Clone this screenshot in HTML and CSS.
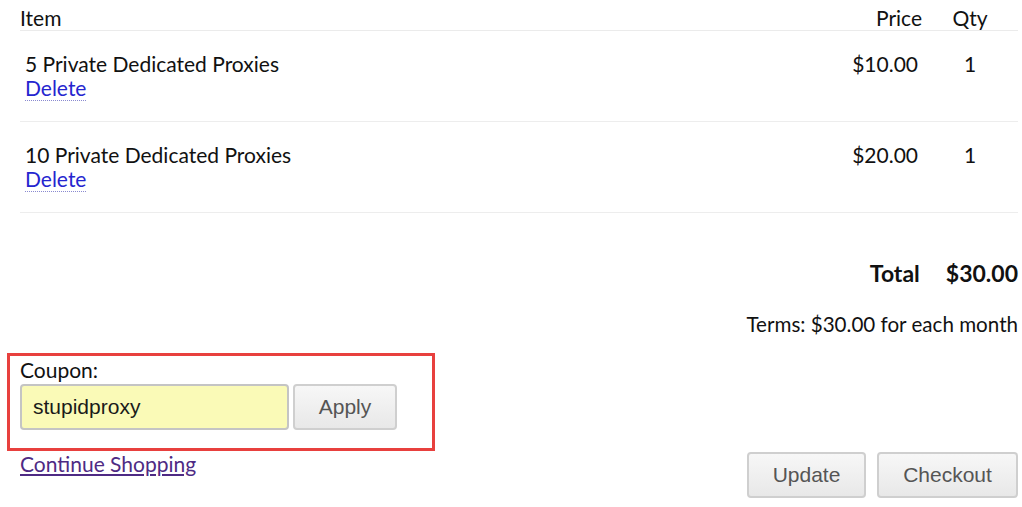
FILE: index.html
```html
<!DOCTYPE html>
<html>
<head>
<meta charset="utf-8">
<link rel="stylesheet" href="styles.css">
</head>
<body>
<div class="cart">
  <table class="items">
    <thead>
      <tr>
        <th class="col-item">Item</th>
        <th class="col-price">Price</th>
        <th class="col-qty">Qty</th>
      </tr>
    </thead>
    <tbody>
      <tr>
        <td class="col-item"><div>5 Private Dedicated Proxies</div><a class="delete" href="#">Delete</a></td>
        <td class="col-price">$10.00</td>
        <td class="col-qty">1</td>
      </tr>
      <tr>
        <td class="col-item"><div>10 Private Dedicated Proxies</div><a class="delete" href="#">Delete</a></td>
        <td class="col-price">$20.00</td>
        <td class="col-qty">1</td>
      </tr>
    </tbody>
  </table>
  <div class="total"><span class="total-label">Total</span><span class="total-value">$30.00</span></div>
  <div class="terms">Terms: $30.00 for each month</div>
  <div class="coupon-box">
    <div class="coupon-label">Coupon:</div>
    <div class="coupon-row">
      <input class="coupon-input" type="text" value="stupidproxy">
      <button class="btn apply">Apply</button>
    </div>
  </div>
  <div class="bottom">
    <a class="continue" href="#">Continue Shopping</a>
    <div class="actions">
      <button class="btn update">Update</button>
      <button class="btn checkout">Checkout</button>
    </div>
  </div>
</div>
</body>
</html>
```
FILE: styles.css
```css
html, body {
  margin: 0;
  padding: 0;
  background: #fff;
}
body {
  font-family: Lato, "Liberation Sans", sans-serif;
  font-size: 21px;
  line-height: 24px;
  color: #111;
}
.cart {
  padding: 6px 4px 0 20px;
}
.items {
  width: 100%;
  border-collapse: collapse;
}
.items th {
  font-weight: normal;
  padding: 0;
  border-bottom: 1px solid #ebebeb;
  text-align: left;
}
.items td {
  padding: 21px 0 21px 5px;
  vertical-align: top;
  border-bottom: 1px solid #ededed;
}
.items th.col-price { text-align: right; padding-right: 0; }
.items td.col-price { text-align: right; padding-right: 4px; }
.items .col-qty { width: 96px; text-align: center; padding-left: 0; }
.delete {
  color: #2525cf;
  text-decoration: none;
  border-bottom: 1px dotted #8a8ad0;
}
.total {
  display: flex;
  justify-content: flex-end;
  align-items: baseline;
  gap: 26px;
  margin-top: 47px;
  font-weight: bold;
  font-size: 23px;
  line-height: 26px;
}
.terms {
  text-align: right;
  margin-top: 26px;
  font-size: 20.6px;
}
.coupon-box {
  margin: 17px 0 0 -13px;
  width: 412px;
  border: 3px solid #e8403e;
  padding: 1px 0 18px 10px;
}
.coupon-label {
  padding-top: 1px;
}
.coupon-row {
  display: flex;
  gap: 4px;
  margin-top: 2px;
}
.coupon-input {
  box-sizing: border-box;
  width: 269px;
  height: 46px;
  margin: 0;
  padding: 0 11px;
  border: 2px solid #c4c4c4;
  border-radius: 4px;
  background: #fafab7;
  font-family: "Liberation Sans", Arial, sans-serif;
  font-size: 21px;
  color: #1a1a1a;
  outline: none;
}
.btn {
  box-sizing: border-box;
  height: 46px;
  margin: 0;
  border: 2px solid #cfcfcf;
  border-radius: 4px;
  background: linear-gradient(#f7f7f7, #e8e8e8);
  font-family: "Liberation Sans", Arial, sans-serif;
  font-size: 21px;
  color: #555;
  padding: 0;
}
.apply { width: 104px; }
.bottom {
  display: flex;
  justify-content: space-between;
  align-items: flex-start;
  margin-top: 1px;
}
.continue {
  color: #4e2a84;
  text-decoration: underline;
  text-underline-offset: 2px;
}
.actions {
  display: flex;
  gap: 11px;
}
.update { width: 119px; }
.checkout { width: 141px; }
```
